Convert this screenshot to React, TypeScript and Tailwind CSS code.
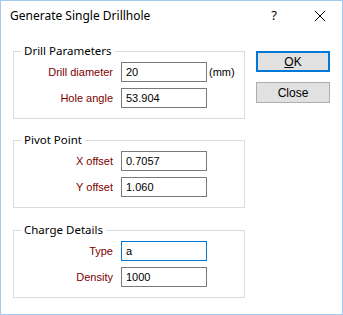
import React from "react";

const labelFont = { fontFamily: '"Liberation Sans", Arial, sans-serif' };

function Field({
  label,
  value,
  active,
  suffix,
}: {
  label: string;
  value: string;
  active?: boolean;
  suffix?: string;
}) {
  return (
    <div className="flex items-center h-[20px]">
      <span className="w-[100px] text-right text-[11px] text-[#800000] pr-[1px]">{label}</span>
      <div
        className={`ml-[7px] w-[86px] h-[20px] border bg-white flex items-center pl-[4px] text-[11px] text-black ${
          active ? "border-[#0078d7]" : "border-[#7a7a7a]"
        }`}
      >
        {value}
      </div>
      {suffix && <span className="ml-[2px] text-[11px] text-black">{suffix}</span>}
    </div>
  );
}

function Group({ title, children, className = "" }: { title: string; children: React.ReactNode; className?: string }) {
  return (
    <fieldset className={`border border-[#dcdcdc] pt-[4px] pb-[10px] ${className}`}>
      <legend
        className="ml-[7px] px-[3px] text-[11.5px] leading-[14px] text-black"
        style={{ fontFamily: '"Noto Sans", "Open Sans", sans-serif' }}
      >
        {title}
      </legend>
      <div className="flex flex-col gap-[6px]">{children}</div>
    </fieldset>
  );
}

export default function App() {
  return (
    <div
      className="w-[343px] h-[315px] border border-[#a3c9ee] bg-white flex flex-col select-none"
      style={labelFont}
    >
      {/* title bar */}
      <div className="h-[29px] flex items-center">
        <span
          className="flex-1 pl-[9px] text-[12px] text-black"
          style={{ fontFamily: '"Noto Sans", "Open Sans", sans-serif' }}
        >
          Generate Single Drillhole
        </span>
        <div className="w-[46px] h-full flex items-center justify-center text-[13px] text-black" style={{ fontFamily: '"Noto Sans", sans-serif' }}>
          ?
        </div>
        <div className="w-[45px] h-full flex items-center justify-center">
          <svg width="10" height="10" viewBox="0 0 10 10">
            <path d="M0 0 L10 10 M10 0 L0 10" stroke="#000" strokeWidth="1" fill="none" />
          </svg>
        </div>
      </div>

      {/* body */}
      <div className="flex pl-[12px] pr-[11px]">
        <div className="w-[232px] pt-[14px] flex flex-col">
          <Group title="Drill Parameters">
            <Field label="Drill diameter" value="20" suffix="(mm)" />
            <Field label="Hole angle" value="53.904" />
          </Group>
          <Group title="Pivot Point" className="mt-[14px]">
            <Field label="X offset" value="0.7057" />
            <Field label="Y offset" value="1.060" />
          </Group>
          <Group title="Charge Details" className="mt-[15px]">
            <Field label="Type" value="a" active />
            <Field label="Density" value="1000" />
          </Group>
        </div>
        <div className="ml-[11px] w-[74px] pt-[21px] flex flex-col gap-[10px]">
          <button className="h-[21px] w-full border-2 border-[#0078d7] bg-[#e1e1e1] text-[12px] text-black flex items-center justify-center">
            <span className="underline">O</span>K
          </button>
          <button className="h-[21px] w-full border border-[#adadad] bg-[#e1e1e1] text-[12px] text-black flex items-center justify-center">
            Close
          </button>
        </div>
      </div>
    </div>
  );
}
